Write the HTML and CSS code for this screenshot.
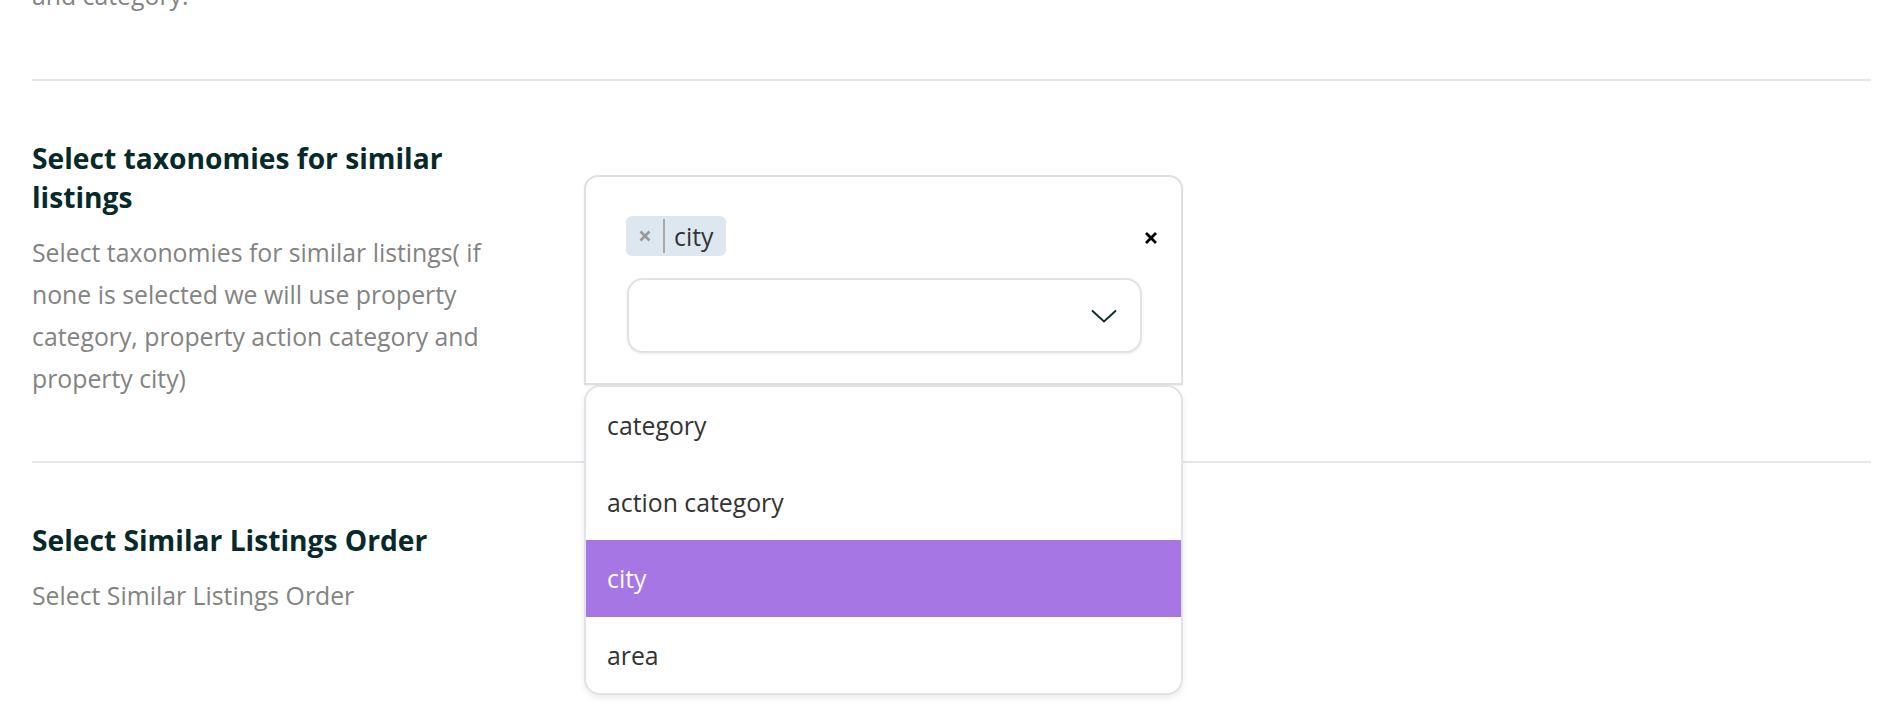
FILE: index.html
```html
<!DOCTYPE html>
<html lang="en">
<head>
<meta charset="utf-8">
<title>Similar listings settings</title>
<link rel="stylesheet" href="styles.css">
</head>
<body>
<div class="page">
  <section class="setting setting-prev">
    <p class="setting-desc">and category.</p>
  </section>

  <section class="setting">
    <div class="setting-label">
      <h3 class="setting-title">Select taxonomies for similar listings</h3>
      <p class="setting-desc">Select taxonomies for similar listings( if none is selected we will use property category, property action category and property city)</p>
    </div>
    <div class="setting-control">
      <div class="multiselect">
        <div class="ms-tags-row">
          <span class="ms-tag">
            <span class="ms-tag-remove">
              <svg width="14" height="14" viewBox="0 0 14 14" aria-hidden="true"><path d="M2.5 2.5 L11.5 11.5 M11.5 2.5 L2.5 11.5" stroke="#999999" stroke-width="2.6" fill="none"/></svg>
            </span>
            <span class="ms-tag-sep"></span>
            <span class="ms-tag-label">city</span>
          </span>
          <span class="ms-clear">
            <svg width="12" height="12" viewBox="0 0 12 12" aria-hidden="true"><path d="M1 1 L11 11 M11 1 L1 11" stroke="#000" stroke-width="2.8" fill="none"/></svg>
          </span>
        </div>
        <div class="ms-input">
          <svg class="ms-chevron" width="26" height="14" viewBox="0 0 26 14" aria-hidden="true"><path d="M1 1.5 L13 12.5 L25 1.5" stroke="#0b2f30" stroke-width="1.9" fill="none"/></svg>
        </div>
        <ul class="ms-menu">
          <li class="ms-option">category</li>
          <li class="ms-option">action category</li>
          <li class="ms-option is-active">city</li>
          <li class="ms-option">area</li>
        </ul>
      </div>
    </div>
  </section>

  <section class="setting setting-last">
    <div class="setting-label">
      <h3 class="setting-title">Select Similar Listings Order</h3>
      <p class="setting-desc">Select Similar Listings Order</p>
    </div>
    <div class="setting-control"></div>
  </section>
</div>
</body>
</html>
```

FILE: styles.css
```css
* {
  box-sizing: border-box;
}

html,
body {
  margin: 0;
  padding: 0;
  background: #ffffff;
}

body {
  font-family: "Open Sans", "Liberation Sans", sans-serif;
  height: 728px;
  overflow: hidden;
}

.page {
  padding: 0 33px 0 32px;
  margin-top: -26px;
}

.setting {
  display: grid;
  grid-template-columns: 470px 599px;
  column-gap: 82px;
  align-items: start;
  padding: 58px 0 62px;
  border-bottom: 2px solid #e3e6ea;
}

.setting-prev {
  display: block;
  padding: 0 0 63px;
}

.setting-last {
  border-bottom: none;
  padding-bottom: 140px;
}

.setting-title {
  margin: 0;
  font-size: 28.2px;
  line-height: 39px;
  font-weight: 700;
  color: #062a2b;
}

.setting-desc {
  margin: 14px 0 0;
  font-size: 24.8px;
  line-height: 42px;
  color: #838383;
}

.setting-prev .setting-desc {
  margin: 0;
}

.multiselect {
  position: relative;
  margin-top: 36px;
  width: 599px;
  height: 210px;
  padding: 39px 24px 30px 40px;
  border: 2px solid #e0e0e0;
  border-radius: 14px 14px 0 0;
  background: #ffffff;
  box-shadow: 0 1px 2px rgba(0, 0, 0, 0.08);
}

.ms-tags-row {
  display: flex;
  align-items: center;
  justify-content: space-between;
  height: 40px;
}

.ms-tag {
  display: inline-flex;
  align-items: center;
  height: 40px;
  padding: 0 13px 0 12px;
  border-radius: 6px;
  background: #dde7ef;
}

.ms-tag-remove {
  display: flex;
  width: 14px;
  height: 14px;
}

.ms-tag-sep {
  width: 2px;
  height: 34px;
  margin: 0 9px 0 11px;
  background: #a9a9a9;
}

.ms-tag-label {
  font-size: 24.8px;
  line-height: 40px;
  color: #333333;
}

.ms-clear {
  display: flex;
  width: 12px;
  height: 12px;
  margin-top: 3px;
}

.ms-input {
  display: flex;
  align-items: center;
  justify-content: flex-end;
  height: 75px;
  margin: 22px 15px 0 1px;
  padding-right: 23px;
  border: 2px solid #dfe3e8;
  border-radius: 16px;
  background: #ffffff;
  box-shadow: 0 1px 3px rgba(0, 0, 0, 0.08);
}

.ms-chevron {
  display: block;
}

.ms-menu {
  position: absolute;
  top: calc(100% + 2px);
  left: -2px;
  width: 599px;
  margin: 0;
  padding: 0;
  list-style: none;
  background: #ffffff;
  border: 2px solid #e0e3e7;
  border-radius: 16px;
  box-shadow: 0 3px 6px rgba(0, 0, 0, 0.08);
  overflow: hidden;
  z-index: 5;
}

.ms-option {
  height: 76.5px;
  padding-left: 21px;
  font-size: 24.8px;
  line-height: 76.5px;
  color: #333333;
}

.ms-option.is-active {
  background: #a676e4;
  color: #ffffff;
}
```
